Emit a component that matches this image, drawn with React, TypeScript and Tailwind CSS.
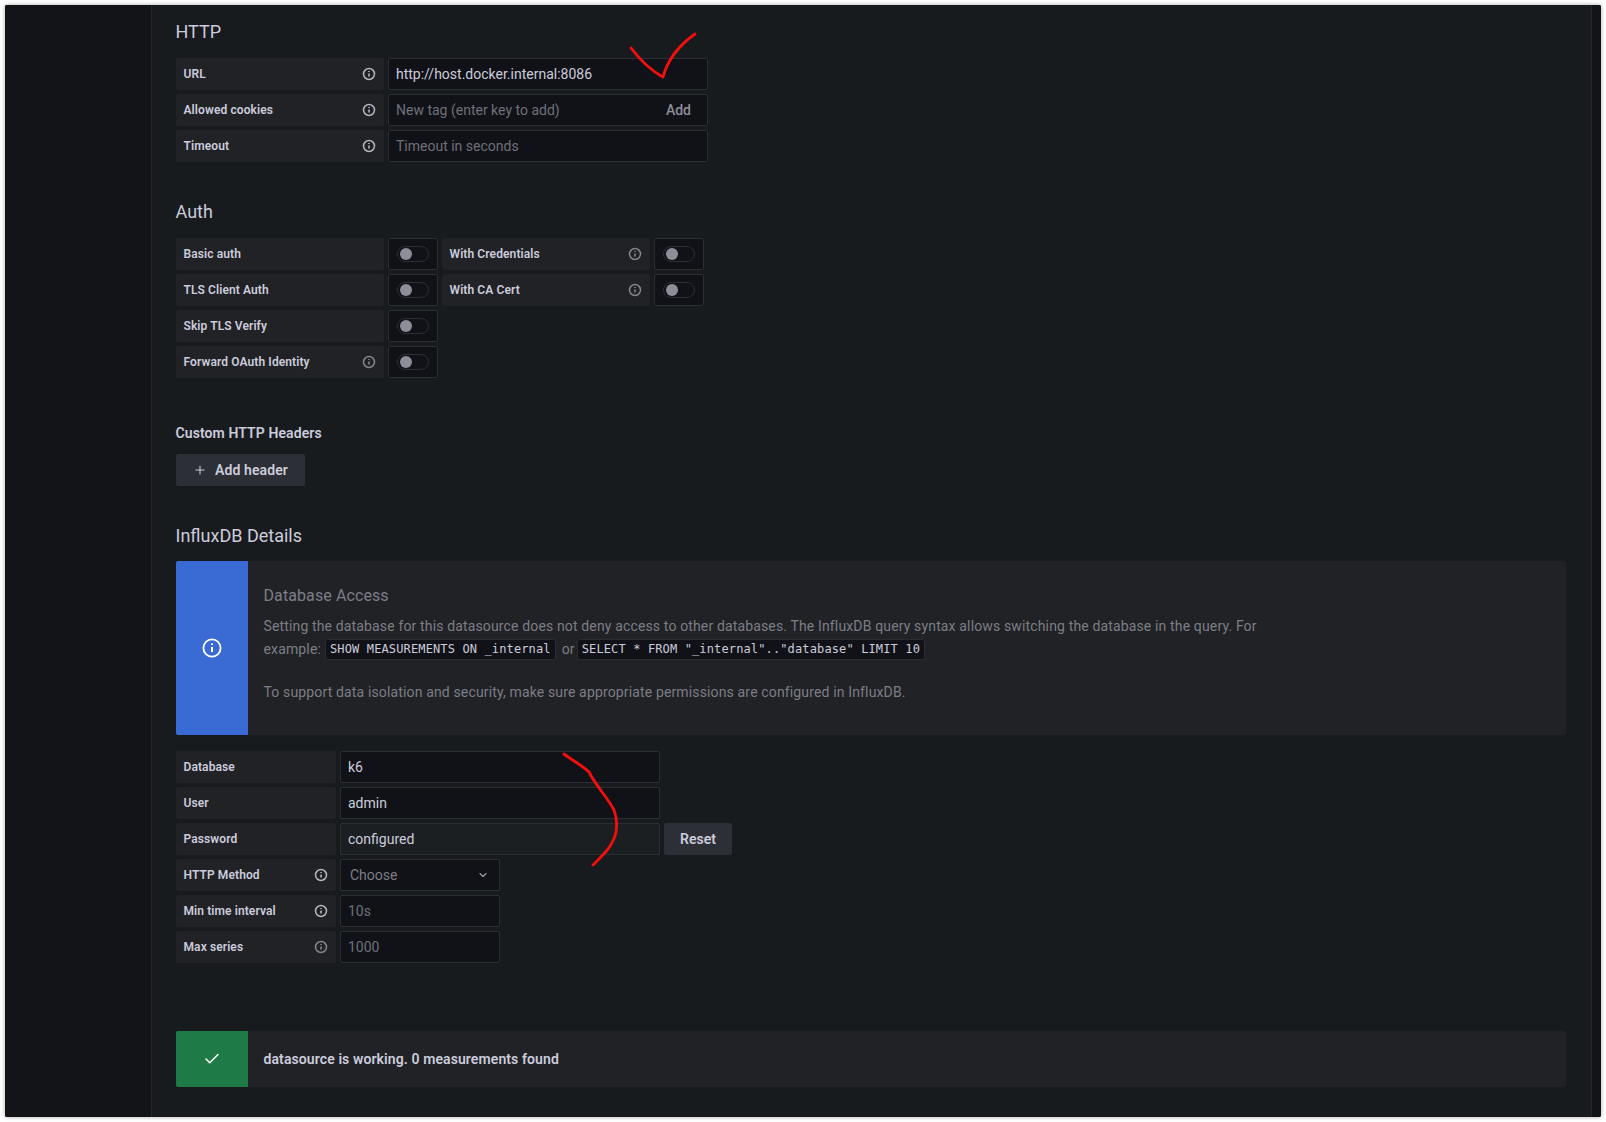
import { ChevronDown, Check, Plus } from "lucide-react";

function InfoIcon({ className = "" }: { className?: string }) {
  return (
    <svg viewBox="0 0 14 14" className={`w-[14px] h-[14px] ${className}`} fill="none" stroke="currentColor">
      <circle cx="7" cy="7" r="5.5" strokeWidth="1.5" />
      <path d="M7 6.4v3.2M7 4v1.1" strokeWidth="1.6" />
    </svg>
  );
}

function Label({ text, width = "w-[208px]", info = false, dim = false }: { text: string; width?: string; info?: boolean; dim?: boolean }) {
  return (
    <div className={`${width} h-8 shrink-0 rounded-[2px] bg-[#202226] pl-[7.5px] pr-2 flex items-center justify-between text-xs font-semibold tracking-[0.1px] text-[#ccccdc]`}>
      <span>{text}</span>
      {info && <InfoIcon className={dim ? "text-[#85858f]" : "text-[#b5b5c0]"} />}
    </div>
  );
}

function Field({ value, placeholder, width = "w-[320px]", filled = false }: { value?: string; placeholder?: string; width?: string; filled?: boolean }) {
  return (
    <div className={`${width} h-8 shrink-0 rounded-[2px] border border-[#2b2e33] pl-[7px] pr-2 flex items-center text-sm ${filled ? "bg-[#1b1f22]" : "bg-[#111217]"} ${value ? "text-[#ccccdc]" : "text-[#6e7077]"}`}>
      {value ?? placeholder}
    </div>
  );
}

function Toggle() {
  return (
    <div className="w-[50px] h-8 shrink-0 rounded-[2px] border border-[#2b2e33] bg-[#111217] flex items-center justify-center">
      <div className="w-8 h-4 rounded-full border border-[#2b2e33] bg-[#111217] flex items-center pl-[2px]">
        <div className="w-3 h-3 rounded-full bg-[#8e8e9a]" />
      </div>
    </div>
  );
}

function Heading({ children, className = "" }: { children: string; className?: string }) {
  return <h4 className={`h-7 -ml-[0.5px] flex items-center text-lg text-[#ccccdc] ${className}`}>{children}</h4>;
}

function Code({ children }: { children: string }) {
  return (
    <code className="h-[21px] leading-[19px] px-1 rounded-[3px] border border-[#2a2c31] bg-[#111217] text-xs text-[#ccccdc] font-['DejaVu_Sans_Mono',monospace] tracking-[0.13px] whitespace-pre">
      {children}
    </code>
  );
}

export default function App() {
  return (
    <div className="relative w-[1606px] h-[1122px] overflow-hidden bg-white p-[5px] font-['Roboto',sans-serif]">
      <div className="flex h-[1112px] rounded-[2px] bg-[#181b1e] shadow-[0_0_4px_rgba(0,0,0,0.35)]">
        <div className="w-[147px] shrink-0 rounded-l-[2px] bg-[#121417] border-r border-[#24272b]" />
        <div className="flex-1 pl-6 pr-[24px] pt-[13px] min-w-0">
          <div className="w-[1390px]">
            <Heading className="mb-3">HTTP</Heading>
            <div className="flex flex-col gap-1">
              <div className="flex gap-1">
                <Label text="URL" info />
                <Field value="http://host.docker.internal:8086" />
              </div>
              <div className="flex gap-1">
                <Label text="Allowed cookies" info />
                <div className="w-[320px] h-8 rounded-[2px] border border-[#2b2e33] bg-[#111217] pl-[7px] pr-2 flex items-center justify-between text-sm text-[#6e7077]">
                  <span>New tag (enter key to add)</span>
                  <span className="mr-2 font-medium text-[#8e8e9a]">Add</span>
                </div>
              </div>
              <div className="flex gap-1">
                <Label text="Timeout" info />
                <Field placeholder="Timeout in seconds" />
              </div>
            </div>

            <Heading className="mt-9 mb-3">Auth</Heading>
            <div className="flex flex-col gap-1">
              <div className="flex gap-1">
                <Label text="Basic auth" />
                <Toggle />
                <Label text="With Credentials" info dim />
                <Toggle />
              </div>
              <div className="flex gap-1">
                <Label text="TLS Client Auth" />
                <Toggle />
                <Label text="With CA Cert" info dim />
                <Toggle />
              </div>
              <div className="flex gap-1">
                <Label text="Skip TLS Verify" />
                <Toggle />
              </div>
              <div className="flex gap-1">
                <Label text="Forward OAuth Identity" info dim />
                <Toggle />
              </div>
            </div>

            <div className="mt-[45px] mb-[11px] -ml-[0.5px] h-5 flex items-center text-sm font-semibold tracking-[0.1px] text-[#ccccdc]">Custom HTTP Headers</div>
            <button className="h-8 w-[129px] rounded-[2px] bg-[#2c2f35] flex items-center pl-[17px] gap-2 text-sm font-semibold tracking-[0.1px] text-[#ccccdc]">
              <Plus size={14} strokeWidth={1.8} />
              Add header
            </button>

            <Heading className="mt-9 mb-[11px]">InfluxDB Details</Heading>
            <div className="flex h-[174px] rounded-[2px] bg-[#202226]">
              <div className="w-[72px] shrink-0 rounded-l-[2px] bg-[#3a6bd4] flex items-center justify-center text-white">
                <svg viewBox="0 0 20 20" className="w-5 h-5 -mt-px" fill="none" stroke="currentColor">
                  <circle cx="10" cy="10" r="8.6" strokeWidth="1.8" />
                  <path d="M10 9v5M10 5.6v1.5" strokeWidth="2" />
                </svg>
              </div>
              <div className="pl-[15.5px] pt-[23px] text-sm text-[#7d7e85] tracking-[0.145px]">
                <div className="h-6 flex items-center text-base tracking-[0.1px]">Database Access</div>
                <div className="mt-[8px] leading-[21.5px]">
                  Setting the database for this datasource does not deny access to other databases. The InfluxDB query syntax allows switching the database in the query. For
                </div>
                <div className="mt-px flex items-center gap-1">
                  <span>example:</span>
                  <Code>SHOW MEASUREMENTS ON _internal</Code>
                  <span className="ml-[2px] -mr-[2px]">or</span>
                  <Code>SELECT * FROM "_internal".."database" LIMIT 10</Code>
                </div>
                <div className="mt-[22px] leading-[21.5px]">To support data isolation and security, make sure appropriate permissions are configured in InfluxDB.</div>
              </div>
            </div>

            <div className="mt-4 flex flex-col gap-1">
              <div className="flex gap-1">
                <Label text="Database" width="w-[160px]" />
                <Field value="k6" />
              </div>
              <div className="flex gap-1">
                <Label text="User" width="w-[160px]" />
                <Field value="admin" />
              </div>
              <div className="flex gap-1">
                <Label text="Password" width="w-[160px]" />
                <Field value="configured" filled />
                <button className="h-8 w-[68px] rounded-[2px] bg-[#2c2f35] text-sm font-semibold text-[#ccccdc]">Reset</button>
              </div>
              <div className="flex gap-1">
                <Label text="HTTP Method" width="w-[160px]" info />
                <div className="w-[160px] h-8 rounded-[2px] border border-[#2b2e33] bg-[#111217] pl-[9px] pr-[10px] flex items-center justify-between text-sm text-[#7d7e85]">
                  <span>Choose</span>
                  <ChevronDown size={12} strokeWidth={2.2} className="text-[#a0a0aa]" />
                </div>
              </div>
              <div className="flex gap-1">
                <Label text="Min time interval" width="w-[160px]" info />
                <Field placeholder="10s" width="w-[160px]" />
              </div>
              <div className="flex gap-1">
                <Label text="Max series" width="w-[160px]" info dim />
                <Field placeholder="1000" width="w-[160px]" />
              </div>
            </div>

            <div className="mt-[68px] flex h-14 rounded-[2px] bg-[#202226]">
              <div className="w-[72px] shrink-0 rounded-l-[2px] bg-[#1e7a46] flex items-center justify-center text-white">
                <Check size={18} strokeWidth={2} />
              </div>
              <div className="pl-[15.5px] flex items-center text-sm font-semibold tracking-[0.1px] text-[#ccccdc]">datasource is working. 0 measurements found</div>
            </div>
          </div>
        </div>
        <div className="w-[10px] shrink-0 rounded-r-[2px] bg-[#121417] border-l border-[#24272b]" />
      </div>

      {/* red marker strokes drawn over the screenshot */}
      <svg className="absolute inset-0 pointer-events-none" width="1606" height="1122" fill="none" stroke="#f40f0f" strokeWidth="2.8" strokeLinecap="round" strokeLinejoin="round">
        <path d="M631 48C640 60 650 70 663 77C667 62 678 46 695 34" />
        <path d="M564 754C575 762 583 766 589 772C596 786 608 798 614 810C617 818 617 826 616 832C613 846 604 854 593 865" />
      </svg>
    </div>
  );
}
